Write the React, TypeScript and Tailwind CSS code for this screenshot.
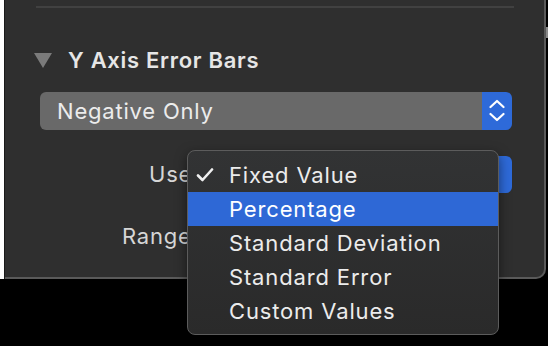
import React from "react";

const Stepper = () => (
  <svg width="16" height="24" viewBox="0 0 16 24" fill="none" stroke="white" strokeWidth="2.2" strokeLinecap="round" strokeLinejoin="round">
    <path d="M1.5 8 L8 2 L14.5 8" />
    <path d="M1.5 15 L8 21 L14.5 15" />
  </svg>
);

const items = ["Fixed Value", "Percentage", "Standard Deviation", "Standard Error", "Custom Values"];

export default function App() {
  return (
    <div className="relative w-[548px] h-[346px] bg-black overflow-hidden font-['Inter','Noto_Sans',sans-serif] text-[#e4e4e4]">
      <div className="flex h-[279px]">
        <div className="w-[4px] bg-white" />
        <div className="w-[1px] bg-[#1a1a1a]" />
        <div className="w-[541px] bg-[#2f2f2f] border-r-2 border-b-2 border-[#5a5a5a] rounded-br-[10px] flex flex-col">
          <div className="mt-[6px] ml-[31px] w-[478px] h-[2px] bg-[#414141]" />
          <div className="mt-[38px] h-[28px] flex items-center">
            <svg className="ml-[29px]" width="18" height="15" viewBox="0 0 18 15">
              <path d="M0 0 H18 L9 15 Z" fill="#7b7b7b" />
            </svg>
            <span className="ml-[16px] text-[22px] font-semibold tracking-[0.7px] text-[#e6e6e6] leading-none">Y Axis Error Bars</span>
          </div>
          <div className="mt-[18px] ml-[35px] w-[472px] h-[38px] flex rounded-[6px] overflow-hidden">
            <div className="flex-1 bg-[#696969] flex items-center pl-[17px] text-[22px] tracking-[0.8px] text-[#ececec]">Negative Only</div>
            <div className="w-[30px] bg-[#2e6ad9] flex items-center justify-center">
              <Stepper />
            </div>
          </div>
          <div className="mt-[26px] h-[37px] flex items-center">
            <span className="ml-[144px] w-[44px] text-[22px] tracking-[0.8px] text-[#d6d6d6]">Use</span>
            <div className="ml-[7px] w-[312px] h-[37px] flex rounded-[6px] overflow-hidden">
              <div className="flex-1 bg-[#696969]" />
              <div className="w-[16px] bg-[#2e6ad9]" />
            </div>
          </div>
          <div className="mt-[28px] h-[30px] flex items-center">
            <span className="ml-[117px] text-[22px] tracking-[0.8px] text-[#d6d6d6]">Range</span>
          </div>
        </div>
        <div className="w-[2px] relative">
          <div className="absolute left-0 top-[27px] w-[2px] h-[11px] bg-[#8a8a8a]" />
        </div>
      </div>

      <div className="absolute left-[187px] top-[150px] w-[312px] h-[185px] rounded-[8px] border border-[#5c5c5c] bg-gradient-to-b from-[#323334] to-[#2a2a2a] pt-[7px] shadow-[0_4px_12px_rgba(0,0,0,0.5)]">
        {items.map((t, i) => (
          <div
            key={t}
            className={`h-[34px] flex items-center text-[22px] tracking-[0.85px] ${i === 1 ? "bg-[#2e68d6] text-white" : "text-[#ececec]"}`}
          >
            <div className="w-[41px] flex justify-start pl-[8px]">
              {i === 0 && (
                <svg width="18" height="14" viewBox="0 0 18 14" fill="none" stroke="#f0f0f0" strokeWidth="2.6" strokeLinecap="round" strokeLinejoin="round">
                  <path d="M2 7.5 L6.5 12 L16 1.5" />
                </svg>
              )}
            </div>
            <span>{t}</span>
          </div>
        ))}
      </div>
    </div>
  );
}
